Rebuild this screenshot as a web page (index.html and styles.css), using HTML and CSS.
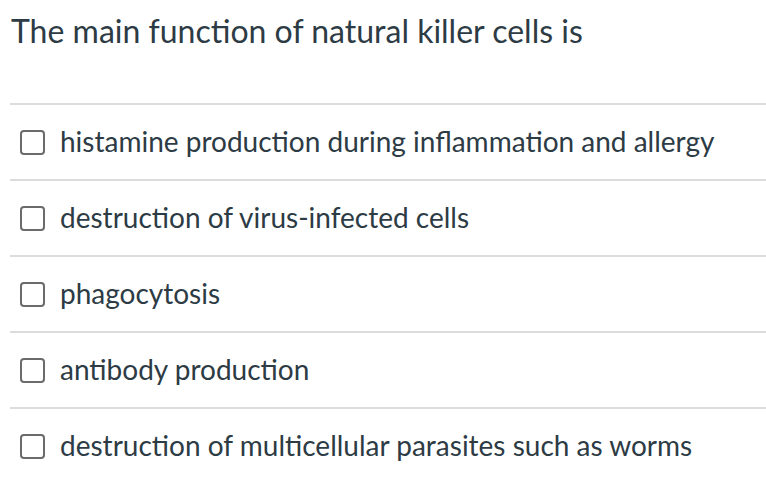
FILE: index.html
```html
<!DOCTYPE html>
<html>
<head>
<meta charset="utf-8">
<link rel="stylesheet" href="styles.css">
</head>
<body>
<div class="question">
  <div class="question-text">The main function of natural killer cells is</div>
  <div class="answers">
    <label class="answer"><span class="box"></span><span class="label">histamine production during inflammation and allergy</span></label>
    <label class="answer"><span class="box"></span><span class="label">destruction of virus-infected cells</span></label>
    <label class="answer"><span class="box"></span><span class="label">phagocytosis</span></label>
    <label class="answer"><span class="box"></span><span class="label">antibody production</span></label>
    <label class="answer"><span class="box"></span><span class="label">destruction of multicellular parasites such as worms</span></label>
  </div>
</div>
</body>
</html>
```
FILE: styles.css
```css
html, body {
  margin: 0;
  padding: 0;
  background: #fff;
}
body {
  font-family: Lato, "Open Sans", sans-serif;
  color: #2d3b45;
}
.question {
  padding-left: 10px;
}
.question-text {
  font-size: 32px;
  line-height: 38px;
  padding-top: 12px;
  height: 103px;
  box-sizing: border-box;
  padding-left: 1px;
}
.answers {
  display: flex;
  flex-direction: column;
}
.answer {
  display: flex;
  align-items: center;
  border-top: 2px solid #dcdcdc;
  height: 76px;
  box-sizing: border-box;
  padding-left: 10px;
}
.box {
  width: 21px;
  height: 21px;
  border: 2px solid #6b6b6b;
  border-radius: 4px;
  flex: none;
  margin-right: 15px;
}
.label {
  font-size: 28px;
  line-height: 34px;
  margin-bottom: 2px;
}
```
